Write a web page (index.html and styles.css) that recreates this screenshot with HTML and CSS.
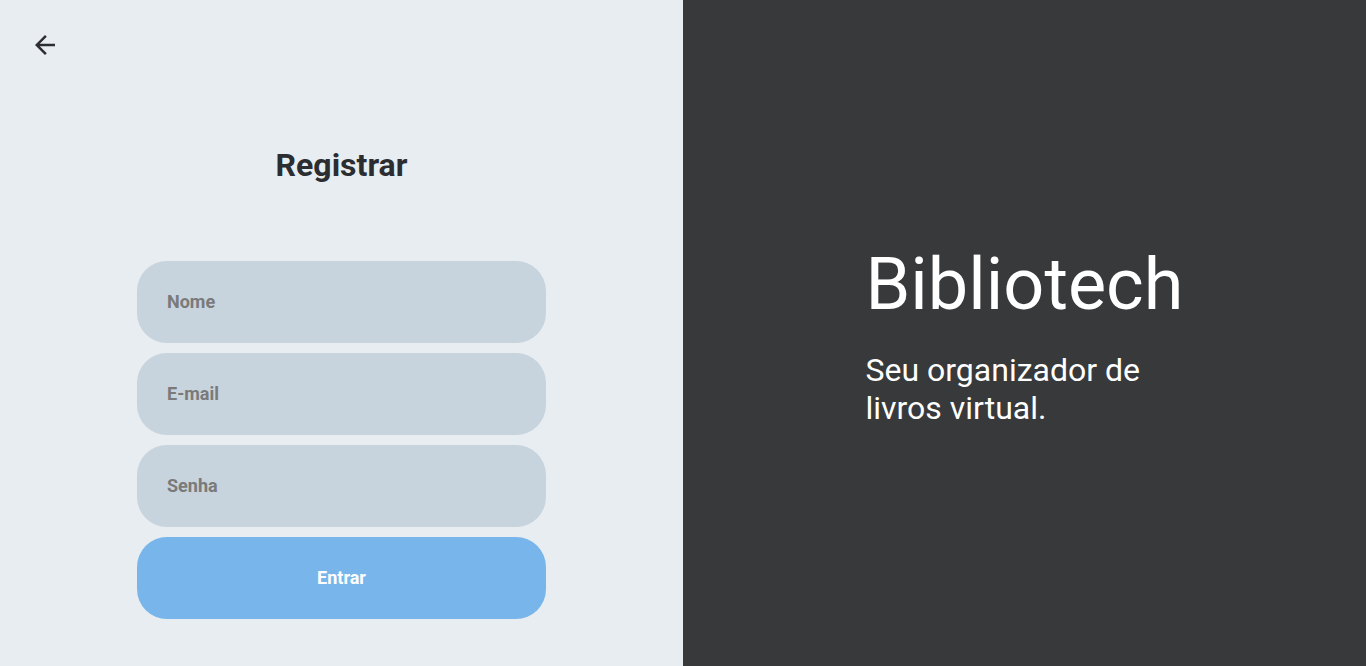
FILE: index.html
```html
<!DOCTYPE html>
<html lang="pt-BR">
<head>
<meta charset="utf-8">
<title>Registrar - Bibliotech</title>
<link rel="stylesheet" href="styles.css">
</head>
<body>
<main class="page">
  <section class="left">
    <a class="back" href="#" aria-label="Voltar">
      <svg viewBox="0 0 24 24" width="30" height="30"><path d="M20 11H7.83l5.59-5.59L12 4l-8 8 8 8 1.41-1.41L7.83 13H20v-2z" fill="#2b2d30"/></svg>
    </a>
    <h1 class="title">Registrar</h1>
    <form class="form">
      <input class="field" type="text" placeholder="Nome">
      <input class="field" type="email" placeholder="E-mail">
      <input class="field" type="password" placeholder="Senha">
      <button class="submit" type="button">Entrar</button>
    </form>
  </section>
  <section class="right">
    <div class="brand">
      <h2 class="brand-name">Bibliotech</h2>
      <p class="brand-text">Seu organizador de livros virtual.</p>
    </div>
  </section>
</main>
</body>
</html>
```

FILE: styles.css
```css
* { box-sizing: border-box; }
html, body { margin: 0; height: 100%; }
body { font-family: Roboto, "Noto Sans", sans-serif; }
.page { display: flex; height: 666px; }
.left {
  width: 683px;
  background: #e8edf2;
  display: flex;
  flex-direction: column;
  align-items: center;
  padding-top: 145px;
  position: relative;
}
.back {
  position: absolute;
  left: 30px;
  top: 30px;
  width: 30px;
  height: 30px;
  display: block;
}
.back svg { display: block; }
.title {
  margin: 0;
  font-size: 32px;
  font-weight: 700;
  color: #2b2d30;
  line-height: 40px;
}
.form {
  margin-top: 76px;
  display: flex;
  flex-direction: column;
  gap: 10px;
  width: 409px;
}
.field {
  height: 82px;
  border: none;
  border-radius: 30px;
  background: #c7d3dd;
  padding: 0 30px 2px;
  font-family: Roboto, sans-serif;
  font-size: 18px;
  font-weight: 700;
  color: #555;
  outline: none;
}
.field::placeholder { color: #7a7a7a; opacity: 1; }
.submit {
  height: 82px;
  border: none;
  border-radius: 30px;
  background: #77b5ea;
  color: #fff;
  font-family: Roboto, sans-serif;
  font-size: 18px;
  font-weight: 700;
  padding: 0 0 2px;
  cursor: pointer;
}
.right {
  flex: 1;
  background: #38393b;
  display: flex;
  align-items: center;
  justify-content: center;
  padding-top: 6px;
  color: #fff;
}
.brand { width: 318px; }
.brand-name {
  margin: 0;
  font-size: 72px;
  font-weight: 400;
  line-height: 80px;
}
.brand-text {
  margin: 26px 0 0;
  font-size: 32px;
  line-height: 38px;
}
```
